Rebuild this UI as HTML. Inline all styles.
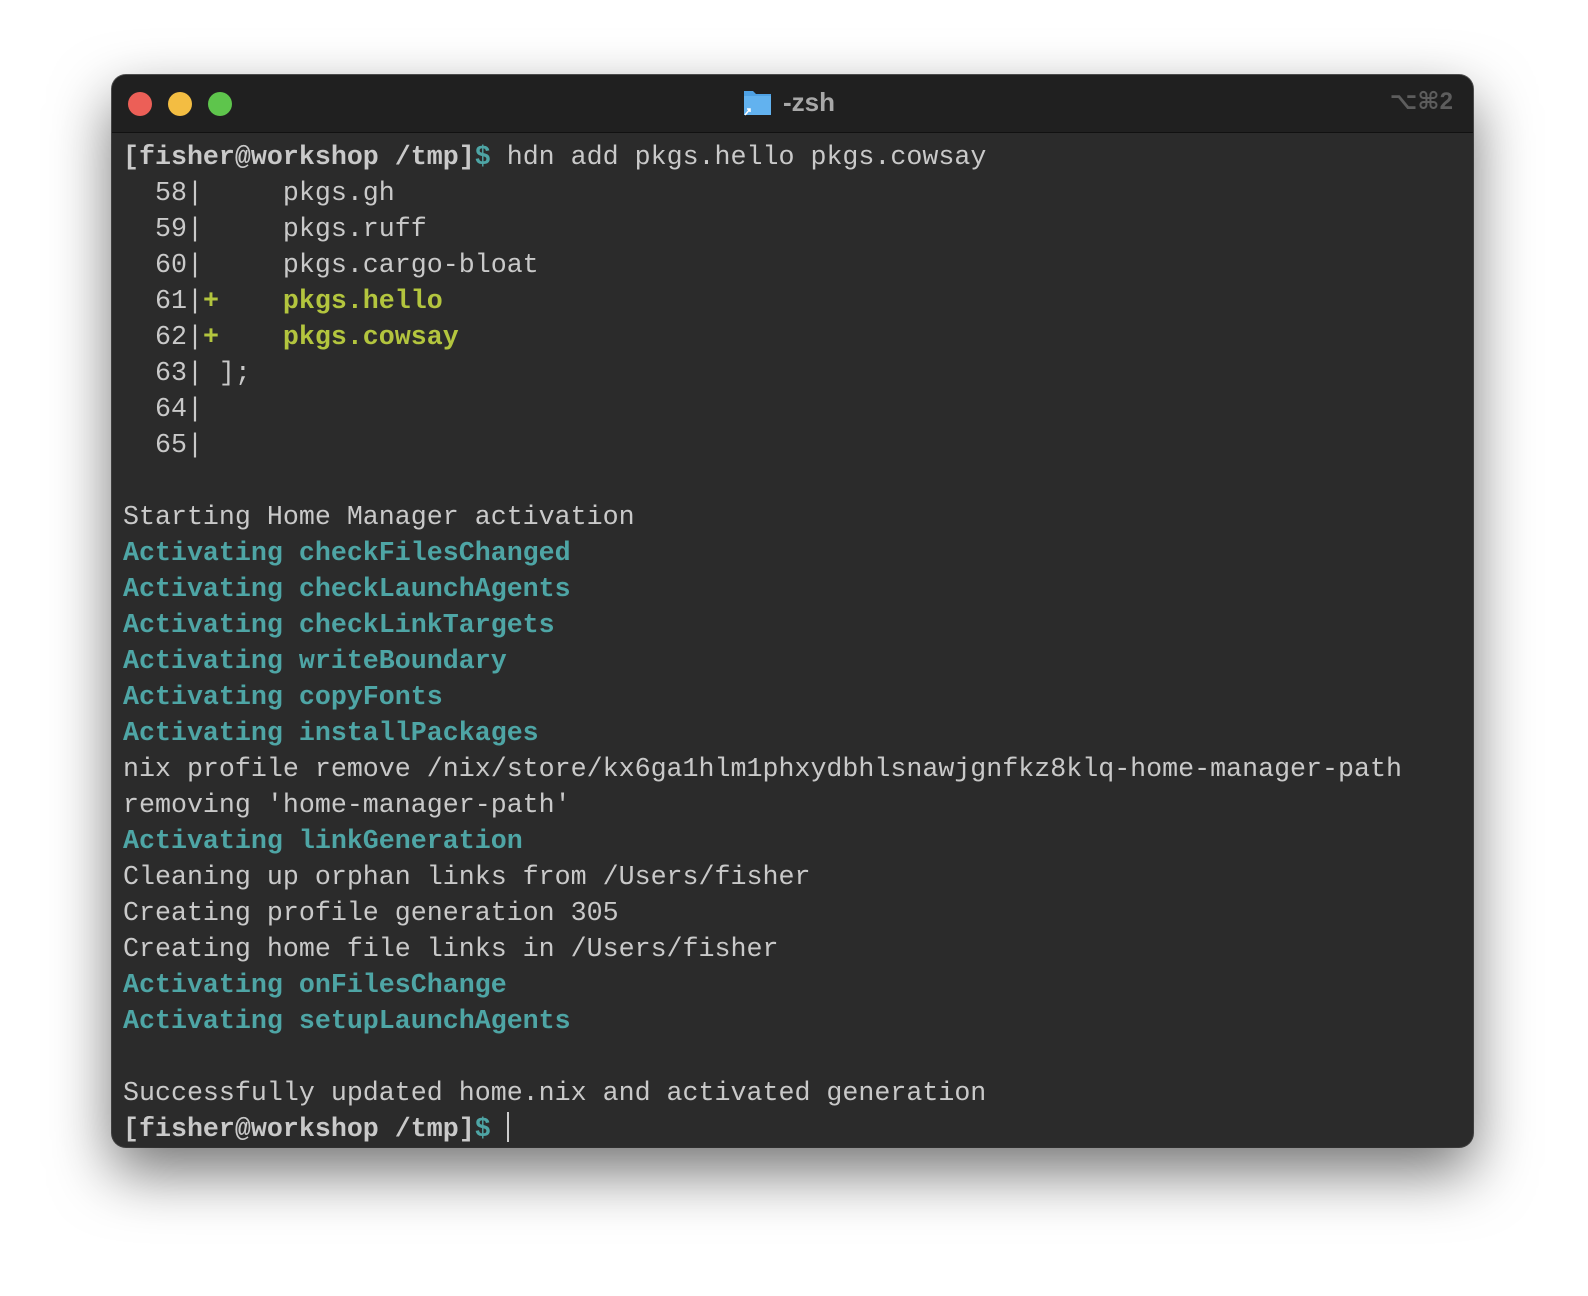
<!DOCTYPE html>
<html><head><meta charset="utf-8"><style>
html,body{margin:0;padding:0;width:1588px;height:1296px;background:#fff;overflow:hidden}
.win{position:absolute;left:112px;top:75px;width:1361px;height:1072px;border-radius:14px;background:#2b2b2b;box-shadow:0 25px 60px rgba(0,0,0,.55),0 0 0 1px #555;overflow:hidden}
.tb{position:absolute;left:0;top:0;right:0;height:57px;background:#202020;border-bottom:1px solid #111}
.dot{position:absolute;top:17px;width:24px;height:24px;border-radius:50%}
.title{position:absolute;left:671px;top:12px;font:bold 26px "Liberation Sans",sans-serif;color:#a8a8a8}
.kb{position:absolute;right:20px;top:12px;font:bold 24px "Liberation Sans","DejaVu Sans",sans-serif;color:#5d5d5d}
pre{position:absolute;left:11px;top:65px;margin:0;font:26.65px/36px "Liberation Mono",monospace;color:#c9c9c9}
.t{color:#4ea5a5;font-weight:bold}
.g{color:#b3c53e;font-weight:bold}
.p{font-weight:bold;color:#c9c9c9}
.cur{display:inline-block;width:2px;height:30px;background:#ccc;vertical-align:-6px}
</style></head><body>
<div class="win">
<div class="tb">
<div class="dot" style="left:16px;background:#ec5f57"></div>
<div class="dot" style="left:56px;background:#f3bd42"></div>
<div class="dot" style="left:96px;background:#5ec54c"></div>
<svg style="position:absolute;left:631px;top:12px" width="30" height="30" viewBox="0 0 30 30"><path d="M1 4h9l3 3h15v21H1z" fill="#4ea1e4"/><path d="M1 9h27v19H1z" fill="#62b2ef"/><path d="M2 28l5-6M4 22h3v3" stroke="#fff" stroke-width="1.5" fill="none"/></svg>
<div class="title">-zsh</div>
<div class="kb">⌥⌘2</div>
</div>
<pre><span class="p">[fisher@workshop /tmp]</span><span class="t">$</span> hdn add pkgs.hello pkgs.cowsay
  58|     pkgs.gh
  59|     pkgs.ruff
  60|     pkgs.cargo-bloat
  61|<span class="g">+    pkgs.hello</span>
  62|<span class="g">+    pkgs.cowsay</span>
  63| ];
  64|
  65|

Starting Home Manager activation
<span class="t">Activating checkFilesChanged</span>
<span class="t">Activating checkLaunchAgents</span>
<span class="t">Activating checkLinkTargets</span>
<span class="t">Activating writeBoundary</span>
<span class="t">Activating copyFonts</span>
<span class="t">Activating installPackages</span>
nix profile remove /nix/store/kx6ga1hlm1phxydbhlsnawjgnfkz8klq-home-manager-path
removing 'home-manager-path'
<span class="t">Activating linkGeneration</span>
Cleaning up orphan links from /Users/fisher
Creating profile generation 305
Creating home file links in /Users/fisher
<span class="t">Activating onFilesChange</span>
<span class="t">Activating setupLaunchAgents</span>

Successfully updated home.nix and activated generation
<span class="p">[fisher@workshop /tmp]</span><span class="t">$</span> <span class="cur"></span></pre>
</div>
</body></html>
